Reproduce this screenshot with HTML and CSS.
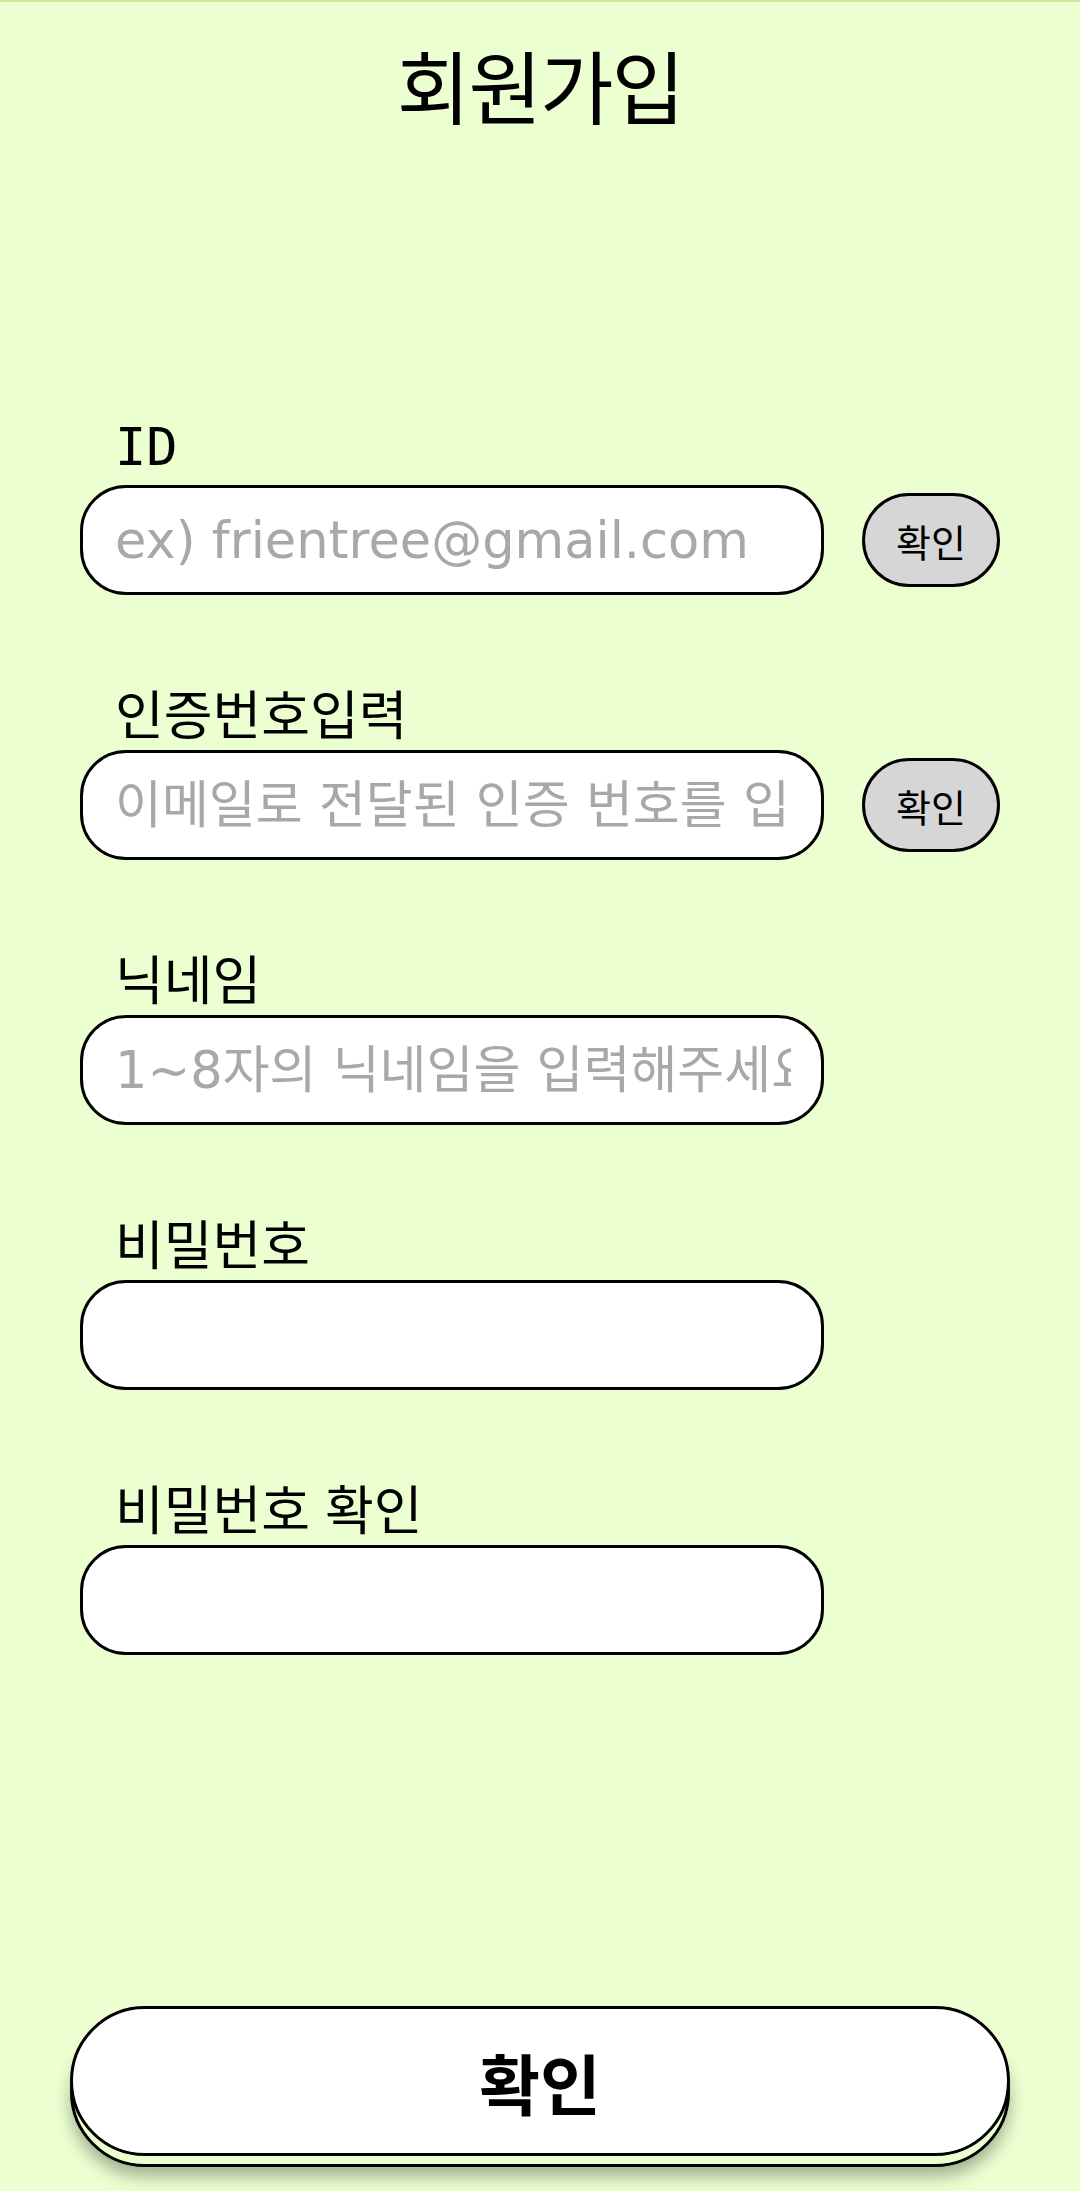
FILE: index.html
```html
<!DOCTYPE html>
<html lang="ko">
<head>
<meta charset="utf-8">
<title>회원가입</title>
<link rel="stylesheet" href="styles.css">
</head>
<body>
<div class="page">
  <h1 class="title">회원가입</h1>
  <form class="form">
    <div class="field">
      <label class="label label-latin">ID</label>
      <div class="row">
        <input class="input" type="text" placeholder="ex) frientree@gmail.com">
        <button type="button" class="check">확인</button>
      </div>
    </div>
    <div class="field">
      <label class="label">인증번호입력</label>
      <div class="row">
        <input class="input" type="text" placeholder="이메일로 전달된 인증 번호를 입력해주세요.">
        <button type="button" class="check">확인</button>
      </div>
    </div>
    <div class="field">
      <label class="label">닉네임</label>
      <div class="row">
        <input class="input" type="text" placeholder="1~8자의 닉네임을 입력해주세요.">
      </div>
    </div>
    <div class="field">
      <label class="label">비밀번호</label>
      <div class="row">
        <input class="input" type="password">
      </div>
    </div>
    <div class="field">
      <label class="label">비밀번호 확인</label>
      <div class="row">
        <input class="input" type="password">
      </div>
    </div>
  </form>
  <div class="submit-wrap">
    <button type="button" class="submit">확인</button>
  </div>
</div>
</body>
</html>
```

FILE: styles.css
```css
html, body {
  margin: 0;
  padding: 0;
}
body {
  background: #ebffd1;
  font-family: "Noto Sans CJK KR", "Noto Sans", sans-serif;
  color: #000;
}
.page {
  width: 1080px;
  min-height: 2191px;
  box-sizing: border-box;
  border-top: 2px solid #c6e79c;
  display: flex;
  flex-direction: column;
}
.title {
  margin: 36px 0 0;
  font-size: 80px;
  line-height: 90px;
  font-weight: 400;
  text-align: center;
  letter-spacing: -2px;
}
.form {
  margin-top: 289px;
  padding-left: 80px;
  display: flex;
  flex-direction: column;
  gap: 87px;
}
.field {
  display: flex;
  flex-direction: column;
  gap: 8px;
}
.label {
  padding-left: 35px;
  font-size: 53px;
  line-height: 60px;
}
.label-latin {
  font-family: "DejaVu Sans Mono", "Noto Sans CJK KR", monospace;
  font-size: 52px;
}
.row {
  display: flex;
  align-items: center;
  gap: 38px;
}
.input {
  width: 744px;
  height: 110px;
  box-sizing: border-box;
  border: 3px solid #000;
  border-radius: 46px;
  background: #fff;
  padding: 0 30px 0 32px;
  font-family: "DejaVu Sans", "Noto Sans CJK KR", sans-serif;
  font-size: 51px;
  color: #000;
  outline: none;
}
.input::placeholder {
  color: #a8a8a8;
  font-family: "DejaVu Sans", "Noto Sans CJK KR", sans-serif;
}
.check {
  width: 138px;
  height: 94px;
  box-sizing: border-box;
  border: 3px solid #000;
  border-radius: 47px;
  background: #d6d6d6;
  font-family: "Noto Sans CJK KR", sans-serif;
  font-size: 38px;
  color: #000;
  padding: 0;
}
.submit-wrap {
  margin-top: 351px;
  padding-left: 70px;
}
.submit {
  position: relative;
  width: 940px;
  height: 150px;
  box-sizing: border-box;
  border: 3px solid #000;
  border-radius: 75px;
  background: #fff;
  font-family: "Noto Sans CJK KR", sans-serif;
  font-size: 66px;
  font-weight: 700;
  color: #000;
  padding: 0;
}
.submit::before {
  content: "";
  position: absolute;
  left: -3px;
  right: -3px;
  top: 8px;
  bottom: -14px;
  border: 3px solid #000;
  border-radius: 75px;
  background: #ebffd1;
  box-shadow: 0 10px 16px rgba(0, 0, 0, 0.3);
  z-index: -1;
}
```
